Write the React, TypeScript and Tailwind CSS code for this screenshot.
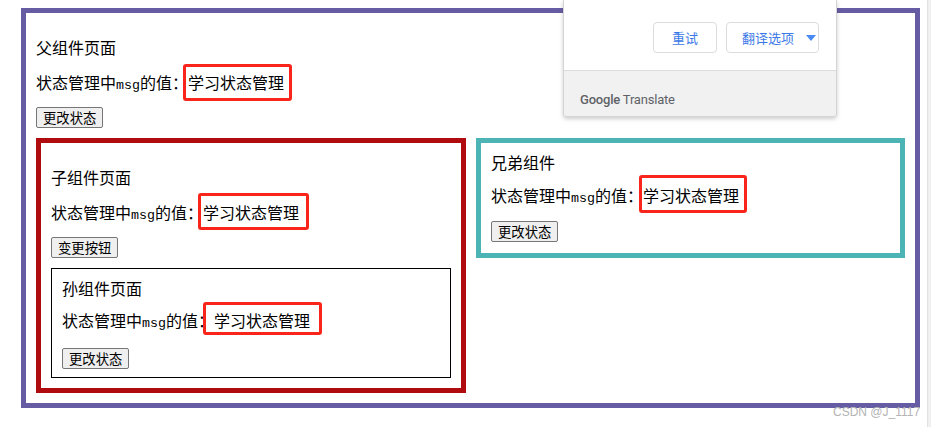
import React from "react";

const FONT = { fontFamily: '"Noto Sans CJK SC", "Noto Sans", sans-serif' };

function Btn({ label }: { label: string }) {
  return (
    <button
      className="block h-[21px] px-[6px] border border-[#767676] bg-[#efefef] rounded-[2px] text-[13.33px] leading-none text-black"
      style={FONT}
    >
      {label}
    </button>
  );
}

function ValueLine({
  cls,
  box,
}: {
  cls: string;
  box: string;
}) {
  return (
    <div className={`h-[20px] text-[16px] leading-[20px] text-black whitespace-nowrap ${cls}`}>
      状态管理中
      <span className="text-[13.33px]" style={{ fontFamily: '"Liberation Mono", monospace' }}>
        msg
      </span>
      的值：
      <span className="relative inline-block">
        学习状态管理
        <span className={`absolute border-[3px] border-[#f9241a] rounded-[3px] ${box}`} />
      </span>
    </div>
  );
}

export default function App() {
  return (
    <div className="relative w-[931px] h-[427px] bg-white overflow-hidden" style={FONT}>
      {/* parent box */}
      <div className="ml-[21px] mt-[8px] w-[899px] border-[5px] border-[#665ca3] px-[10px] pt-[24px] pb-[10px]">
        <div className="h-[20px] text-[16px] leading-[20px] text-black">父组件页面</div>
        <ValueLine cls="mt-[15px]" box="left-[-5px] top-[-8px] w-[109px] h-[37px]" />
        <div className="mt-[15px]">
          <Btn label="更改状态" />
        </div>
        <div className="mt-[10px] flex items-start gap-[10px]">
          {/* child */}
          <div className="w-[430px] border-[5px] border-[#b00c0f] px-[10px] pt-[24px] pb-[10px]">
            <div className="h-[20px] text-[16px] leading-[20px] text-black">子组件页面</div>
            <ValueLine cls="mt-[15px]" box="left-[-5px] top-[-9px] w-[111px] h-[37px]" />
            <div className="mt-[15px]">
              <Btn label="变更按钮" />
            </div>
            {/* grandchild */}
            <div className="mt-[10px] border border-black px-[10px] pt-[9px] pb-[8px]">
              <div className="h-[20px] text-[16px] leading-[20px] text-black">孙组件页面</div>
              <ValueLine cls="mt-[12px]" box="left-[-11px] top-[-8px] w-[119px] h-[33px]" />
              <div className="mt-[18px]">
                <Btn label="更改状态" />
              </div>
            </div>
          </div>
          {/* sibling */}
          <div className="w-[429px] border-[5px] border-[#4db4b6] px-[10px] pt-[9px] pb-[11px]">
            <div className="h-[20px] text-[16px] leading-[20px] text-black">兄弟组件</div>
            <ValueLine cls="mt-[13px]" box="left-[-4px] top-[-10px] w-[108px] h-[38px]" />
            <div className="mt-[16px]">
              <Btn label="更改状态" />
            </div>
          </div>
        </div>
      </div>

      {/* Google translate popup */}
      <div className="absolute left-[563px] top-0 w-[274px] h-[117px] bg-white border border-t-0 border-[#d4d4d4] rounded-b-[4px] shadow-[0_2px_4px_rgba(0,0,0,0.2)] overflow-hidden flex flex-col">
        <div className="h-[70px] flex items-start justify-end gap-[9px] pr-[17px] pt-[22px]">
          <div
            className="w-[64px] h-[31px] border border-[#dadce0] rounded-[4px] flex items-center justify-center text-[13px] text-[#3b78e7]"
            style={{ fontFamily: '"Noto Sans CJK SC", Roboto, sans-serif' }}
          >
            重试
          </div>
          <div
            className="w-[93px] h-[31px] border border-[#dadce0] rounded-[4px] flex items-center pl-[15px] gap-[12px] text-[13px] text-[#3b78e7]"
            style={{ fontFamily: '"Noto Sans CJK SC", Roboto, sans-serif' }}
          >
            <span>翻译选项</span>
            <svg width="10" height="6" viewBox="0 0 10 6">
              <path d="M0 0 L10 0 L5 6 Z" fill="#4a8af4" />
            </svg>
          </div>
        </div>
        <div className="flex-1 bg-[#f1f1f1] border-t border-[#dcdcdc] pl-[16px] pt-[14px]">
          <span className="text-[13px] text-[#5f6368] tracking-[-0.2px]" style={{ fontFamily: 'Roboto, "Open Sans", sans-serif' }}>
            <span className="font-medium">Google</span> Translate
          </span>
        </div>
      </div>

      {/* right edge strip */}
      <div className="absolute right-0 top-0 w-[4px] h-full bg-[#f0f0f0] border-l border-[#e2e2e2]" />

      {/* watermark */}
      <div
        className="absolute left-[833px] top-[405px] text-[12px] leading-[14px] text-[#b4b4b4] whitespace-nowrap"
        style={{ fontFamily: '"Liberation Sans", sans-serif' }}
      >
        CSDN @J_1117
      </div>
    </div>
  );
}
